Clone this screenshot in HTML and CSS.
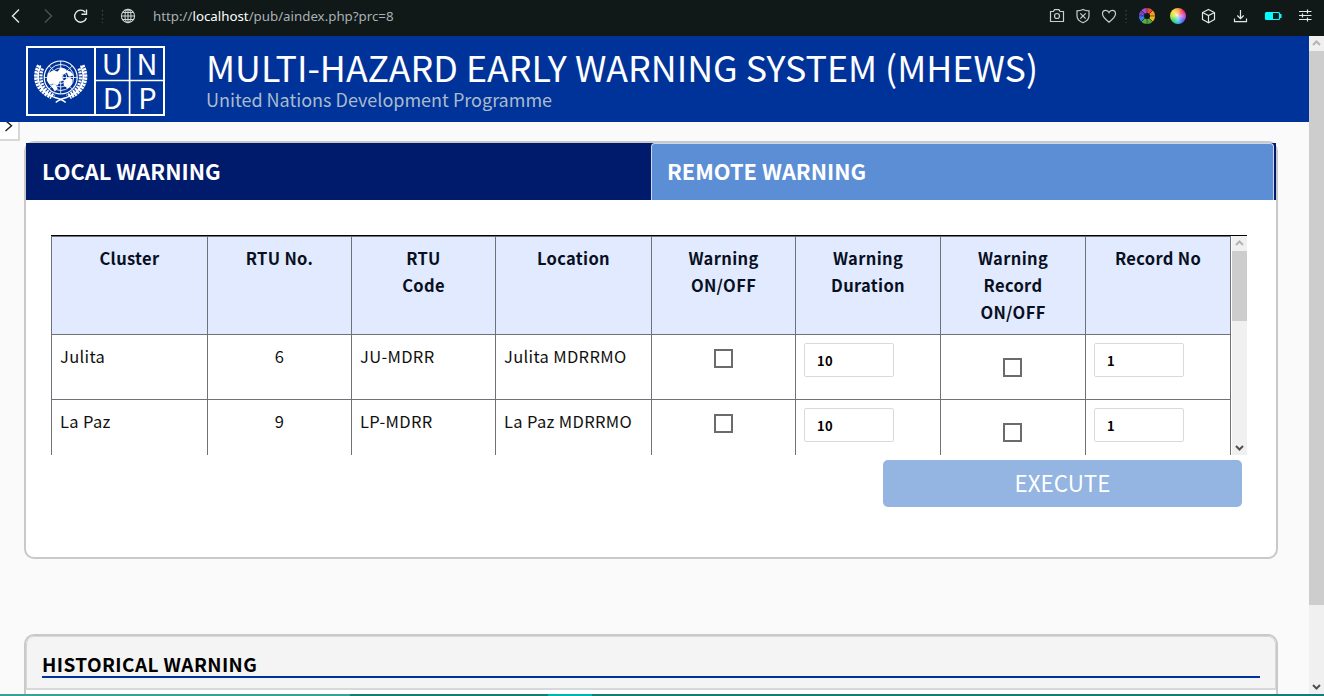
FILE: index.html
```html
<!DOCTYPE html>
<html lang="en">
<head>
<meta charset="utf-8">
<title>Multi-Hazard Early Warning System</title>
<link rel="stylesheet" href="styles.css">
</head>
<body>
<div class="browser-bar">
  <svg class="nav-icons" width="140" height="36" viewBox="0 0 140 36" fill="none" stroke="#e4e8e8" stroke-width="1.4">
    <path d="M19 9.5 12.5 16 19 22.5"/>
    <path d="M45 9.5 51.500 16 45 22.500" stroke="#4a5252"/>
    <path d="M85.300 12.300A6 6 0 1 0 86.400 18"/>
    <path d="M86.500 9.500V14.300H81.500"/>
    <path d="M102.500 10v13" stroke="#3d4545" stroke-width="1.200" stroke-dasharray="1.500 2.500"/>
    <g stroke-width="1.100" stroke="#cdd3d3"><circle cx="128" cy="16" r="6.600"/><ellipse cx="128" cy="16" rx="3" ry="6.600"/><path d="M121.500 16h13M128 9.400v13.200M122.500 12.500h11M122.500 19.500h11"/></g>
  </svg>
  <div class="url">http://<span>localhost</span>/pub/aindex.php?prc=8</div>
  <svg class="tool-icons" width="284" height="36" viewBox="1040 0 284 36" fill="none" stroke="#c8cece" stroke-width="1.200">
    <path d="M1050.500 11.500h3l1-1.900h4.500l1 1.900h3.500v10h-13z"/><circle cx="1057" cy="16" r="2.500"/>
    <path d="M1083 9.500c2 1 4 1.400 6 1.400v5c0 3-2.500 5.300-6 6.800-3.500-1.500-6-3.800-6-6.800v-5c2 0 4-.4 6-1.400z"/><path d="M1080.300 13.300l5.400 5.400m0-5.400-5.400 5.400"/>
    <path d="M1109 22.200c-4-3.200-6.500-5.600-6.500-8.500 0-2 1.400-3.400 3.200-3.400 1.500 0 2.700.8 3.300 2.200.6-1.400 1.800-2.200 3.300-2.200 1.800 0 3.200 1.400 3.200 3.400 0 2.900-2.500 5.300-6.500 8.500z"/>
    <path d="M1126 10v13" stroke="#3d4545" stroke-dasharray="1.500 2.500"/>
    <g stroke-width="5">
      <path stroke="#f04438" d="M1147 10.400a5.600 5.600 0 0 1 3.960 1.640"/><path stroke="#f59a23" d="M1150.960 12.040a5.600 5.600 0 0 1 1.640 3.960"/><path stroke="#f2b61c" d="M1152.600 16a5.600 5.600 0 0 1-1.640 3.960"/><path stroke="#4fa83c" d="M1150.960 19.960a5.600 5.600 0 0 1-3.960 1.640"/><path stroke="#58ad45" d="M1147 21.600a5.600 5.600 0 0 1-3.960-1.640"/><path stroke="#3d7fe8" d="M1143.040 19.960a5.600 5.600 0 0 1-1.640-3.960"/><path stroke="#6a48c8" d="M1141.400 16a5.600 5.600 0 0 1 1.640-3.960"/><path stroke="#b04bd0" d="M1143.040 12.040a5.600 5.600 0 0 1 3.960-1.640"/>
    </g>
    <path stroke="#101818" stroke-width=".5" d="M1147 7.500v17M1138.500 16h17M1141 10l12 12M1153 10l-12 12"/>
    <path stroke="#e4e8e8" d="M1208.500 9.500l6 3v7l-6 3.200-6-3.200v-7zM1202.500 12.500l6 3 6-3M1208.500 15.500v7"/>
    <path stroke="#e4e8e8" d="M1240.500 10v8.500M1237.300 15.500l3.200 3.200 3.200-3.200M1234.500 18.500v3.200h12v-3.200"/>
    <rect x="1265.500" y="12.500" width="14" height="7" rx="1" stroke="#0ff"/><path fill="#0ff" stroke="none" d="M1266 12h7v8h-7zM1280 14h1.500v4h-1.500z"/>
    <path stroke="#e4e8e8" d="M1299 11.500h12.500M1299 15.500h12.500M1299 19.500h12.500M1307.500 9.500v4M1302.500 13.500v4M1307.500 17.500v4"/>
  </svg>
  <i class="wheel"></i>
</div>

<div class="viewport">
  <main class="page">
    <header class="site-header">
      <svg class="logo" width="139" height="70" viewBox="0 0 139 70" fill="none" stroke="#fff">
        <path stroke-width="2" d="M1 1h137v68H1zM69 1v68"/><path stroke-width="1.700" d="M69 34.500h69M103.600 1v68"/>
        <g transform="translate(34.700 31.500)">
          <circle r="16.500" stroke-width="1.200"/><circle r="13" stroke-width=".9"/><circle r="9.500" stroke-width=".8"/><circle r="6" stroke-width=".8"/><circle r="2.500" stroke-width=".8"/>
          <path stroke-width=".8" d="M0-16.500v33M-16.500 0h33M-11.600-11.600l23.200 23.200M11.600-11.600l-23.200 23.200"/>
          <path fill="#fff" stroke="none" d="M-13-4l5-3 5 1 3-4 5 2 1 3-4 2-1 3 2 3-4 1-2 4-4-2-4 1-3-4zM3 3l5-3 4 2-1 5-4 4-4-3zM-10 7l5 0 2 4-3 3zM5-7l5 1 3 4-5 1z"/>
          <g id="branch">
            <path stroke-width="1.300" d="M-20-12C-26 2-21 15-6 20c4 1 8 2 11 5"/>
            <path stroke-width="4.600" stroke-dasharray="2.300 .8" d="M-21.500-12C-28 1-23 13-9 19.500"/>
            <path stroke-width="3.200" stroke-dasharray="2 1" d="M-18.300-9C-22.500 4-17.500 13-6 18.500"/>
          </g>
          <use href="#branch" transform="scale(-1 1)"/>
        </g>
        <g class="logo-letters" fill="#fff" stroke="none" text-anchor="middle"><text x="86.300" y="28.500">U</text><text x="121" y="28.500">N</text><text x="86.800" y="62.500">D</text><text x="121.500" y="62.500">P</text></g>
      </svg>
      <div class="titles">
        <h1>MULTI-HAZARD EARLY WARNING SYSTEM (MHEWS)</h1>
        <p>United Nations Development Programme</p>
      </div>
    </header>
    <div class="drawer"><svg width="12" height="14" viewBox="0 0 12 14" fill="none" stroke="#222" stroke-width="1.500"><path d="M1.500-1.500 7.500 3.800 1.500 9"/></svg></div>

    <section class="card warnings">
      <nav class="tabs"><div class="tab">LOCAL WARNING</div><div class="tab remote">REMOTE WARNING</div></nav>
      <div class="table-wrap">
        <div class="table">
          <div class="cell th">Cluster</div><div class="cell th">RTU No.</div><div class="cell th">RTU<br>Code</div><div class="cell th">Location</div><div class="cell th">Warning<br>ON/OFF</div><div class="cell th">Warning<br>Duration</div><div class="cell th">Warning<br>Record<br>ON/OFF</div><div class="cell th">Record No</div>
          <div class="cell">Julita</div><div class="cell num">6</div><div class="cell">JU-MDRR</div><div class="cell">Julita MDRRMO</div><div class="cell"><i class="check"></i></div><div class="cell"><div class="field">10</div></div><div class="cell"><i class="check low"></i></div><div class="cell"><div class="field">1</div></div>
          <div class="cell">La Paz</div><div class="cell num">9</div><div class="cell">LP-MDRR</div><div class="cell">La Paz MDRRMO</div><div class="cell"><i class="check"></i></div><div class="cell"><div class="field">10</div></div><div class="cell"><i class="check low"></i></div><div class="cell"><div class="field">1</div></div>
        </div>
        <div class="scrollbar">
          <svg width="15" height="15" viewBox="0 0 15 15" fill="none" stroke="#b4b4b4" stroke-width="2"><path d="M4 9 7.500 5.500 11 9"/></svg>
          <div class="thumb short"></div>
          <svg class="down" width="15" height="15" viewBox="0 0 15 15" fill="none" stroke="#505050" stroke-width="2"><path d="M4 6 7.500 9.500 11 6"/></svg>
        </div>
      </div>
      <div class="execute">EXECUTE</div>
    </section>

    <section class="card history">
      <div class="history-head"><h2>HISTORICAL WARNING</h2></div>
    </section>
  </main>
  <div class="scrollbar page-scroll">
    <svg width="15" height="15" viewBox="0 0 15 15" fill="none" stroke="#b4b4b4" stroke-width="2"><path d="M4 9 7.500 5.500 11 9"/></svg>
    <div class="thumb long"></div>
    <svg class="down" width="15" height="15" viewBox="0 0 15 15" fill="none" stroke="#505050" stroke-width="2"><path d="M4 6 7.500 9.500 11 6"/></svg>
  </div>
</div>
<footer class="taskbar"><i class="seg light"></i><i class="seg"></i><i class="seg active"></i><i class="seg rest"></i></footer>
</body>
</html>
```
FILE: styles.css
```css
* { box-sizing: border-box; }
body {
  margin: 0; width: 1324px; height: 696px; overflow: hidden;
  display: flex; flex-direction: column;
  font-family: "Noto Sans CJK SC", "Noto Sans", sans-serif; color: #000;
}
svg { display: block; flex: none; }
h1, h2, p { margin: 0; font-weight: 400; }

.browser-bar { height: 36px; flex: none; background: #101818; display: flex; position: relative; }
.url { flex: 1; padding-left: 13px; font: 13.3px/33px "Noto Sans", sans-serif; color: #a9b1b4; }
.url span { color: #fff; }
.wheel {
  position: absolute; left: 1170px; top: 8px; width: 16px; height: 16px; border-radius: 50%;
  background: radial-gradient(circle, rgba(255,255,255,.75), rgba(255,255,255,0) 65%),
    conic-gradient(from 0deg, #ff9b3c, #f03050, #d040e0, #5060f0, #30c0f0, #30d060, #c0e030, #ffe040, #ff9b3c);
}

.viewport { height: 658px; flex: none; display: flex; }
.page { width: 1309px; background: #fafafa; overflow: hidden; display: flex; flex-direction: column; }
.site-header { height: 86px; flex: none; background: #003399; display: flex; padding: 10px 0 0 26px; }
.logo-letters { font: 29px "Noto Sans CJK SC", sans-serif; }
.titles { padding-left: 41px; white-space: nowrap; }
.titles h1 { font-size: 35.8px; line-height: 40px; color: #fff; }
.titles p { font-size: 18px; line-height: 22px; color: #a9bbcc; padding-top: 2px; }
.drawer { width: 20px; height: 19px; flex: none; background: #fff; border: solid #d8d8d8; border-width: 0 2px 2px 0; padding-left: 4px; }

.card { width: 1254px; margin-left: 24px; flex: none; border: 2px solid #cac8c9; border-radius: 10px; background: #fff; }
.warnings { height: 418px; }
.tabs { height: 57px; background: #001a6c; display: flex; }
.tab { width: 625px; padding-left: 16px; font-size: 21.8px; line-height: 55px; font-weight: 700; color: #fff; }
.tab.remote { width: 623px; padding-left: 15px; background: #5b8ed4; border: 1px solid #c9d8ee; border-bottom: 0; border-radius: 4px 4px 0 0; line-height: 53px; }

.table-wrap { width: 1196px; height: 220px; margin: 35px 0 0 25px; border-top: 1px solid #000; display: flex; justify-content: space-between; overflow: hidden; }
.table {
  width: 1180px; border-right: 1px solid #6f7377; display: grid;
  grid-template-columns: 156px 144px 144px 156px 144px 145px 145px 145px;
  grid-template-rows: 98px 65px 65px;
}
.cell { border: solid #6f7377; border-width: 1px 0 0 1px; padding: 8px 8px 0; font-size: 16.5px; line-height: 26px; letter-spacing: .33px; color: #111; white-space: nowrap; }
.th { background: #e1eafe; color: #08101f; font-weight: 700; line-height: 27px; text-align: center; }
.num { text-align: center; }
.check { display: block; width: 19px; height: 19px; border: 2px solid #6b6b6b; margin: 6px auto 0; }
.check.low { margin: 15px 0 0 54px; }
.field { width: 90px; height: 34px; border: 1px solid #d8dadc; border-radius: 2px; padding-left: 12px; font-size: 13px; font-weight: 700; line-height: 34px; color: #000; }

.scrollbar { width: 15px; background: #f0f0f0; display: flex; flex-direction: column; }
.thumb { background: #cdcdcd; flex: none; }
.short { height: 70px; }
.long { height: 554px; }
.down { margin-top: auto; }

.execute { width: 359px; height: 47px; margin: 5px 0 0 857px; border-radius: 5px; background: #94b4e2; color: #fff; font-size: 22.4px; line-height: 45px; text-align: center; }

.history { margin-top: 75px; height: 90px; }
.history-head { height: 54px; background: #f4f4f4; border: 1px solid #d8d8dc; border-bottom-width: 2px; border-radius: 8px 8px 0 0; padding: 13px 15px 0; }
.history-head h2 { height: 28px; border-bottom: 2px solid #003399; font-size: 19px; line-height: 28px; font-weight: 700; letter-spacing: .4px; }

.taskbar { height: 2px; display: flex; background: #107f78; }
.seg { width: 198px; background: #107f78; }
.seg.light { width: 350px; background: #35a396; }
.seg.active { width: 44px; background: #00b5b0; }
.seg.rest { flex: 1; }
```
